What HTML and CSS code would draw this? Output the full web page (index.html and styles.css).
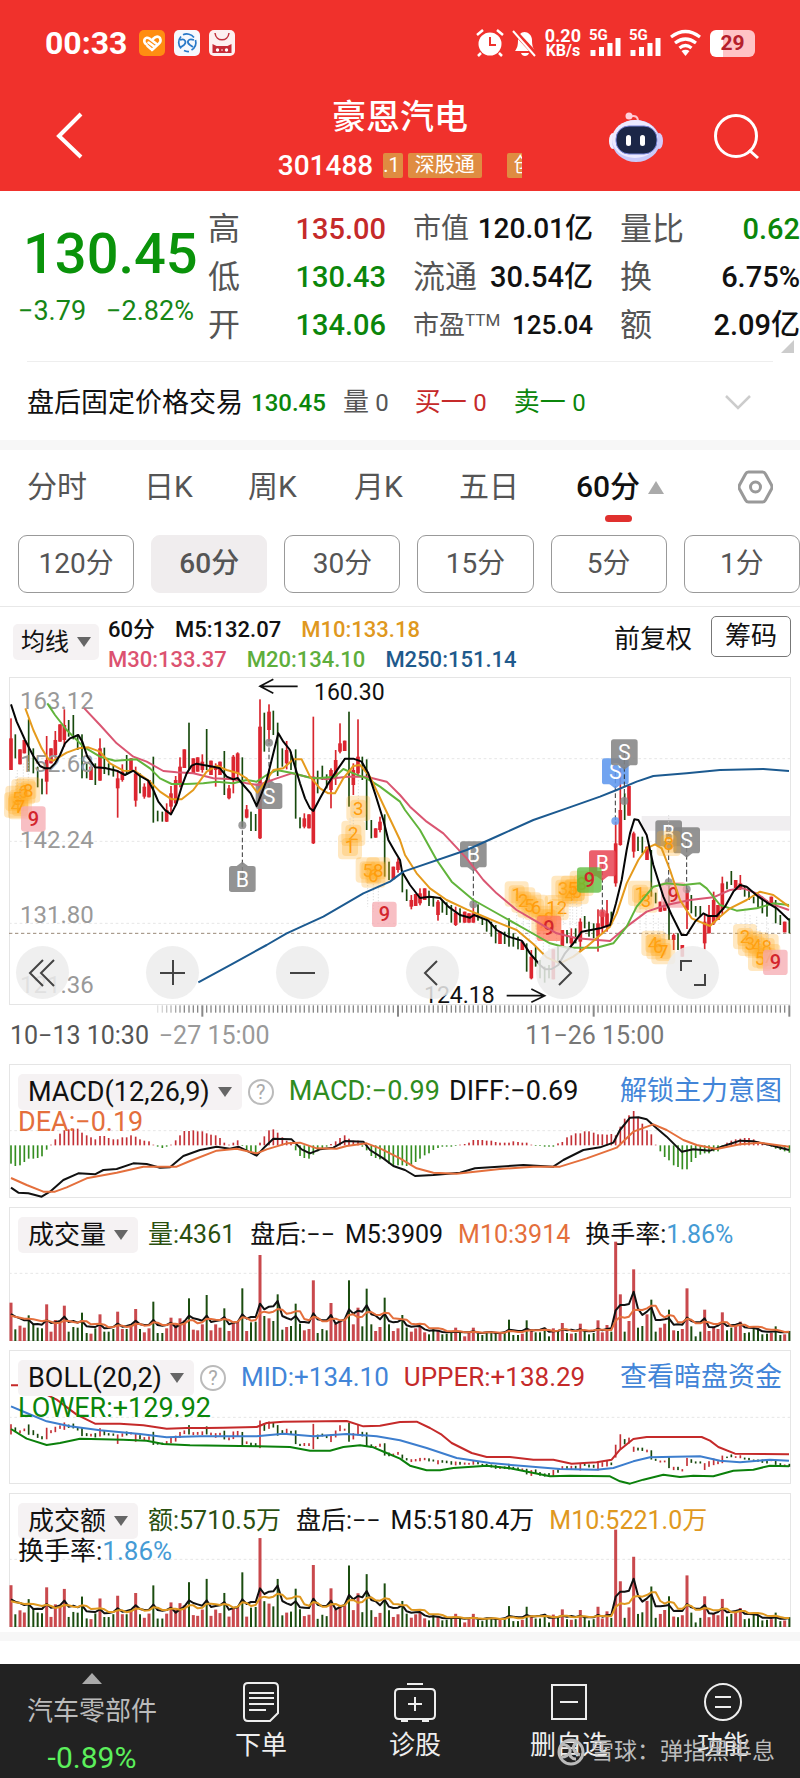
FILE: index.html
```html
<!DOCTYPE html>
<html lang="zh-CN">
<head>
<meta charset="utf-8">
<meta name="viewport" content="width=device-width, initial-scale=1">
<title>豪恩汽电 301488</title>
<link rel="stylesheet" href="styles.css">
</head>
<body>
<header class="top">
  <div class="status">
    <span class="clock">00:33</span>
    <svg class="app" viewBox="0 0 26 26"><rect width="26" height="26" rx="5" fill="#ff8d12"/><path d="M5.500 9.500q2-3 5-1l6.500 5M5.500 9.500q-1 3 2 5M14 9q4-4 7-1 1.500 3-1 5.500L13 20M9.500 12.500l5.500 4M8.500 16l3.500 3" stroke="#fff" stroke-width="2.600" stroke-linecap="round" fill="none"/></svg>
    <svg class="app" viewBox="0 0 26 26"><rect width="26" height="26" rx="5" fill="#f6f8fd"/><path d="M7 18.500a9 9 0 0 1 0-12M9 4.800a9 9 0 0 1 11 2.700M21.500 10a9 9 0 0 1-4 10M15 21.500a9 9 0 0 1-5-1M6 10c5-2 7 2 4 5l-3 2M20 10c-6-2-8 2-4 5l3 2" stroke="#2878c8" stroke-width="1.700" fill="none"/></svg>
    <svg class="app" viewBox="0 0 26 26"><rect width="26" height="26" rx="5" fill="#fdf0f1"/><path d="M6 3c1 9 13 9 14 0" stroke="#c0303c" stroke-width="1.500" fill="none"/><path d="M3.500 14l4 2h11l4-2v9h-19z" fill="#c62a36"/><circle cx="8.500" cy="20" r="1.700" fill="#fff"/><circle cx="17.500" cy="20" r="1.700" fill="#fff"/><circle cx="13" cy="20" r=".8" fill="#fff"/></svg>
    <div class="signals">
      <svg width="28" height="28" viewBox="0 0 28 28"><circle cx="14" cy="15" r="11.500" fill="#fff"/><path d="M1 6l6-5M27 6l-6-5M5 24l-3 3M23 24l3 3" stroke="#fff" stroke-width="2.500"/><path d="M14 8v8h6" stroke="#ee312c" stroke-width="2" fill="none"/></svg>
      <svg width="25" height="28" viewBox="0 0 25 28"><path d="M3 22c2-3 3-5 3-11 0-5 3-8 6.500-8S20 6 20 11c0 6 1 8 3 11zM9 24h8c-1 4-7 4-8 0z" fill="#fff"/><path d="M2 2l23 25" stroke="#ee312c" stroke-width="5"/><path d="M1 2l22 25" stroke="#fff" stroke-width="2"/></svg>
      <span class="speed"><b>0.20</b><b class="unit">KB/s</b></span>
      <span class="cell"><b>5G</b><svg width="32" height="28" viewBox="0 0 32 28"><path d="M4 21v6M12.500 18v9M21 14v13M29 9v18" stroke="#fff" stroke-width="5"/></svg></span>
      <span class="cell"><b>5G</b><svg width="32" height="28" viewBox="0 0 32 28"><path d="M4 21v6M12.500 18v9M21 14v13M29 9v18" stroke="#fff" stroke-width="5"/></svg></span>
      <svg width="33" height="28" viewBox="0 0 33 28"><path d="M2 8q14.500-11 29 0M6 14q10.500-8 21 0M10.500 19q6-5 12 0" stroke="#fff" stroke-width="3.200" fill="none"/><path d="M12.500 22q4-2.500 8 0l-4 5z" fill="#fff"/></svg>
      <span class="battery">29</span>
    </div>
  </div>
  <div class="titlebar">
    <button class="bare back" aria-label="返回"><svg width="28" height="48" viewBox="0 0 28 48"><path d="M25 2L3 24l22 21" stroke="#fff" stroke-width="4" fill="none"/></svg></button>
    <div class="name">
      <h1>豪恩汽电</h1>
      <div class="code"><span>301488</span><div class="tags"><span class="tag first">.1</span><span class="tag">深股通</span><span class="tag last">创</span></div></div>
    </div>
    <div class="tools">
      <button class="bare" aria-label="智能助手"><svg width="54" height="52" viewBox="0 0 54 52"><path d="M29 11c0-6-3-7-9-5" stroke="#ffc4cf" stroke-width="2" fill="none"/><circle cx="20" cy="5" r="3.500" fill="#ffd0dc"/><ellipse cx="4" cy="30" rx="4" ry="8" fill="#f3efff"/><ellipse cx="50" cy="30" rx="4" ry="8" fill="#d5cafa"/><ellipse cx="27" cy="30" rx="24" ry="21" fill="#c9cafa"/><ellipse cx="26" cy="28" rx="23" ry="19" fill="#edeaff"/><rect x="7" y="15" width="41" height="28" rx="13" fill="#1b2647" stroke="#7784d8" stroke-width="1"/><rect x="17" y="24" width="5" height="11" rx="2.500" fill="#fff"/><rect x="31" y="24" width="5" height="11" rx="2.500" fill="#fff"/></svg></button>
      <button class="bare" aria-label="搜索"><svg width="46" height="46" viewBox="0 0 46 46"><circle cx="22" cy="22" r="20.500" stroke="#fff" stroke-width="3" fill="none"/><path d="M35 36l9 8" stroke="#fff" stroke-width="3"/></svg></button>
    </div>
  </div>
</header>

<section class="quote">
  <div class="last-price"><strong>130.45</strong><p><span>−3.79</span><span>−2.82%</span></p></div>
  <dl>
    <div><dt>高</dt><dd class="red">135.00</dd></div>
    <div><dt>低</dt><dd class="green">130.43</dd></div>
    <div><dt>开</dt><dd class="green">134.06</dd></div>
  </dl>
  <dl>
    <div><dt class="mid">市值</dt><dd class="mid">120.01亿</dd></div>
    <div><dt>流通</dt><dd>30.54亿</dd></div>
    <div><dt class="small">市盈<sup>TTM</sup></dt><dd class="small">125.04</dd></div>
  </dl>
  <dl>
    <div><dt>量比</dt><dd class="green">0.62</dd></div>
    <div><dt>换</dt><dd>6.75%</dd></div>
    <div><dt>额</dt><dd>2.09亿</dd></div>
  </dl>
  <i class="corner"></i>
</section>
<section class="fixed-price">
  <span class="fp-name">盘后固定价格交易</span><span class="num green fp-price">130.45</span>
  <span class="gray fp-vol">量 <span class="num">0</span></span><span class="red fp-buy">买一 <span class="num">0</span></span><span class="green">卖一 <span class="num">0</span></span>
  <button class="bare more" aria-label="展开"><svg width="26" height="15" viewBox="0 0 26 15"><path d="M1 1l12 12L25 1" stroke="#ccc" stroke-width="2.500" fill="none"/></svg></button>
</section>

<nav class="tabs">
  <button class="bare">分时</button><button class="bare">日K</button><button class="bare">周K</button><button class="bare">月K</button><button class="bare">五日</button>
  <button class="bare active"><span>60分</span><i class="up"></i></button>
  <button class="bare" aria-label="设置"><svg width="35" height="34" viewBox="0 0 35 34"><path d="M10.500 2h14q2 0 3 2l6 11q1 2 0 4l-6 11q-1 2-3 2h-14q-2 0-3-2l-6-11q-1-2 0-4l6-11q1-2 3-2z" stroke="#999" stroke-width="3" fill="none"/><circle cx="17.500" cy="17" r="5" stroke="#999" stroke-width="3" fill="none"/></svg></button>
</nav>
<div class="periods">
  <button>120分</button><button class="on">60分</button><button>30分</button><button>15分</button><button>5分</button><button>1分</button>
</div>
<div class="averages">
  <button class="pick">均线<i class="down"></i></button>
  <div class="ma">
    <p><span>60分</span><span>M5:132.07</span><span class="orange">M10:133.18</span></p>
    <p><span class="pink">M30:133.37</span><span class="lime">M20:134.10</span><span class="navy">M250:151.14</span></p>
  </div>
  <button class="bare adj">前复权</button>
  <button class="chips">筹码</button>
</div>

<main>
  <section class="panel kline">
    <svg id="kline" class="plot" viewBox="27 21 2346 984"></svg>
    <div class="controls">
      <button aria-label="最早"><svg viewBox="0 0 53 53"><path d="M27 14L14 27l13 13M38 14L25 27l13 13"/></svg></button>
      <button aria-label="放大"><svg viewBox="0 0 53 53"><path d="M27 14v25M14 27h25"/></svg></button>
      <button aria-label="缩小"><svg viewBox="0 0 53 53"><path d="M14 27h25"/></svg></button>
      <button aria-label="向左"><svg viewBox="0 0 53 53"><path d="M31 15L19 27l12 12"/></svg></button>
      <button aria-label="向右"><svg viewBox="0 0 53 53"><path d="M23 15l12 12-12 12"/></svg></button>
      <button aria-label="全屏"><svg viewBox="0 0 53 53"><path d="M15 25V15h11M28 39h11V28"/></svg></button>
    </div>
  </section>
  <div class="axis">
    <svg id="ticks" class="plot" viewBox="27 1005 2346 42"></svg>
    <div class="dates"><span>10−13 10:30</span><span class="fade">−27 15:00</span><span class="later">11−26 15:00</span></div>
  </div>
  <section class="panel">
    <svg id="macd" class="plot" viewBox="27 42 2346 402"></svg>
    <div class="legend">
      <div class="line"><button class="pick big">MACD(12,26,9)<i class="down"></i></button><button class="help" aria-label="说明">?</button><span class="green2 wide">MACD:−0.99</span><span class="wide diff">DIFF:−0.69</span><a href="#macd">解锁主力意图</a></div>
      <div class="line second"><span class="coral">DEA:−0.19</span></div>
    </div>
  </section>
  <section class="panel">
    <svg id="volume" class="plot" viewBox="27 473 2346 402"></svg>
    <div class="legend">
      <div class="line"><button class="pick total">成交量<i class="down"></i></button><span class="forest">量:4361</span><span class="after">盘后:−−</span><span>M5:3909</span><span class="coral">M10:3914</span><span>换手率:<em>1.86%</em></span></div>
    </div>
  </section>
  <section class="panel">
    <svg id="boll" class="plot" viewBox="27 31 2346 402"></svg>
    <div class="legend">
      <div class="line"><button class="pick big">BOLL(20,2)<i class="down"></i></button><button class="help" aria-label="说明">?</button><span class="blue mean">MID:+134.10</span><span class="red mean">UPPER:+138.29</span><a href="#boll">查看暗盘资金</a></div>
      <div class="line second"><span class="green">LOWER:+129.92</span></div>
    </div>
  </section>
  <section class="panel">
    <svg id="amount" class="plot" viewBox="27 463 2346 402"></svg>
    <div class="legend">
      <div class="line"><button class="pick total">成交额<i class="down"></i></button><span class="forest">额:5710.5万</span><span class="after">盘后:−−</span><span>M5:5180.4万</span><span class="orange">M10:5221.0万</span></div>
      <div class="line second rate"><span>换手率:<em>1.86%</em></span></div>
    </div>
  </section>
</main>

<footer class="bottom">
  <button class="bare sector"><i class="up"></i><span>汽车零部件</span><b>-0.89%</b></button>
  <button class="bare"><svg width="40" height="42" viewBox="0 0 40 42"><path d="M7 2h26q4 0 4 4v26l-8 8H7q-4 0-4-4V6q0-4 4-4zM8 12h25M8 17h25M8 23h25M8 29h17" /></svg>下单</button>
  <button class="bare"><svg width="44" height="42" viewBox="0 0 44 42"><path d="M14 3h16M6 8h32q4 0 4 4v22q0 4-4 4H6q-4 0-4-4V12q0-4 4-4zM22 16v14M15 23h14M8 40h7M29 40h7"/></svg>诊股</button>
  <button class="bare"><svg width="38" height="42" viewBox="0 0 38 42"><path d="M2 4h34v34H2zM10 21h18"/></svg>删自选</button>
  <button class="bare"><svg width="40" height="42" viewBox="0 0 40 42"><circle cx="20" cy="21" r="18"/><path d="M12 16h16M12 26h16"/></svg>功能</button>
  <div class="credit"><svg width="28" height="28" viewBox="0 0 28 28"><circle cx="14" cy="14" r="12"/><path d="M5 7c5-1 9 3 8 7s2 7 6 7M19 5c-5 4-2 10 4 12M5 19c5 0 7-3 8-5"/></svg><span>雪球：弹指黑半息</span></div>
</footer>
<script src="charts.js"></script>
</body>
</html>
```
FILE: styles.css
```css
* { box-sizing: border-box; }
body { margin: 0; background: #fff; color: #111; font-family: Roboto, "Noto Sans CJK SC", sans-serif; font-size: 26px; overflow-x: hidden; }
button { font: inherit; color: inherit; margin: 0; padding: 0; cursor: pointer; }
.bare { background: none; border: 0; }
svg { display: block; flex: none; }
p, h1, dl, dd { margin: 0; }
i, em { font-style: normal; }
a { text-decoration: none; color: #4285d8; margin-left: auto; }

.red { color: #c52a2a; }
.green { color: #0b860b; }
.green2 { color: #2f8c20; }
.forest { color: #2a5010; }
.orange { color: #df9820; }
.pink { color: #dc5270; }
.lime { color: #5eae3c; }
.navy { color: #1f5a8c; }
.coral { color: #e46f3c; }
.blue { color: #4285d8; }
.gray { color: #555; }

.top { background: #f0312c; color: #fff; padding: 26px 0 1px; }
.status { display: flex; align-items: center; height: 34px; padding: 0 45px; gap: 9px; }
.clock { font-size: 32px; line-height: 34px; font-weight: 700; margin-right: 3px; }
.app { width: 26px; height: 26px; }
.signals { display: flex; align-items: center; margin-left: auto; gap: 8px; }
.speed { display: flex; flex-direction: column; align-items: center; font-size: 18px; line-height: 16px; }
.unit { font-size: 16px; line-height: 14px; }
.cell { display: grid; }
.cell > * { grid-area: 1 / 1; }
.cell b { font-size: 15px; line-height: 12px; }
.battery { width: 45px; height: 27px; border-radius: 6px; background: linear-gradient(90deg, #fff 29%, #ffc3c6 29%); color: #b5202c; font-size: 21px; font-weight: 700; line-height: 27px; text-align: center; }
.titlebar { display: grid; grid-template-columns: 1fr auto 1fr; align-items: center; padding: 34px 40px 0; }
.back { justify-self: start; margin: 0 0 12px 16px; }
.name { text-align: center; }
h1 { font-size: 34px; line-height: 46px; font-weight: 500; }
.code { display: flex; justify-content: center; align-items: center; gap: 10px; height: 50px; font-size: 28px; font-weight: 500; }
.tags { display: flex; gap: 5px; width: 139px; overflow: hidden; font-size: 20px; font-weight: 400; }
.tag { flex: none; background: #df8c41; border-radius: 2px; padding: 0 7px; line-height: 25px; white-space: nowrap; }
.first { padding: 0 3px 0 0; }
.last { margin-left: 20px; }
.tools { display: flex; justify-content: flex-end; align-items: center; gap: 51px; margin-bottom: 10px; }

.quote { position: relative; display: grid; grid-template-columns: 181fr 178fr 180fr 180fr; column-gap: 27px; padding: 14px 0 12px; }
.last-price { color: #0a930a; margin-right: -27px; padding: 17px 0 0 23px; }
.last-price strong { display: block; font-size: 56px; line-height: 64px; font-weight: 500; }
.last-price p { display: flex; gap: 20px; margin-left: -5px; font-size: 27px; line-height: 50px; color: #168616; }
.quote dl div { display: flex; justify-content: space-between; align-items: center; line-height: 48px; white-space: nowrap; height: 48px; }
dt { font-size: 32px; color: #555; }
dd { font-size: 29px; font-weight: 500; }
.mid { font-size: 28px; }
.small { font-size: 26px; }
sup { font-size: 17px; line-height: 1px; vertical-align: 8px; }
.corner { position: absolute; right: 6px; bottom: 8px; border-left: 13px solid transparent; border-bottom: 13px solid #ccc; }
.fixed-price { display: flex; align-items: center; height: 79px; margin: 0 27px; padding-top: 3px; border-top: 1px solid #eee; line-height: 40px; white-space: nowrap; }
.fp-name { font-size: 27px; }
.num { font-size: 24px; }
.fp-price { margin: 0 17px 0 8px; font-weight: 500; }
.fp-vol { margin-right: 26px; }
.fp-buy { margin-right: 27px; }
.more { margin: 0 22px 0 auto; }

.tabs { display: grid; grid-template-columns: 117fr 104fr 106fr 105fr 117fr 162fr 35fr; align-items: center; height: 83px; padding: 1px 27px 0; border-top: 10px solid #f7f7f7; font-size: 30px; color: #555; white-space: nowrap; }
.tabs button { text-align: left; line-height: 72px; }
.tabs .active { position: relative; display: flex; align-items: center; gap: 8px; color: #111; font-weight: 500; }
.active::after { content: ""; position: absolute; left: 29px; bottom: 1px; width: 27px; height: 7px; border-radius: 4px; background: #e0302e; }
.up { border: 8px solid transparent; border-top: 0; border-bottom: 13px solid #aaa; }
.down { border: 7px solid transparent; border-bottom: 0; border-top: 10px solid #666; margin-left: 8px; }
.periods { display: grid; grid-template-columns: repeat(6, 1fr); gap: 17px; padding: 12px 0 13px 18px; border-bottom: 1px solid #e8e8e8; }
.periods button { height: 58px; border: 1px solid #999; border-radius: 9px; background: #fff; color: #555; font-size: 28px; line-height: 56px; }
.periods .on { background: #f0edee; border-color: #f0edee; font-weight: 500; }
.averages { display: flex; align-items: center; height: 70px; padding: 0 9px 0 13px; white-space: nowrap; }
.pick { display: flex; align-items: center; height: 36px; border: 0; border-radius: 5px; background: #f5f2f3; padding: 0 8px; font-size: 24px; line-height: 36px; }
.ma { margin-left: 9px; padding-top: 5px; font-size: 22px; line-height: 30px; font-weight: 500; }
.ma p { display: flex; gap: 20px; }
.adj { margin: 0 19px 6px auto; line-height: 36px; }
.chips { width: 80px; height: 41px; margin-bottom: 12px; border: 1px solid #777; border-radius: 5px; background: #fff; line-height: 36px; }

main { padding: 0 9px; border-bottom: 9px solid #f7f7f7; }
.panel { display: grid; box-shadow: inset 0 0 0 1px #e5e5e5; margin-bottom: 9px; }
.panel:last-child { margin-bottom: 5px; }
.panel > * { grid-area: 1 / 1; }
.plot { width: 100%; height: auto; overflow: visible; }
.panel.kline { margin-bottom: 0; }
.controls { align-self: end; display: grid; grid-template-columns: repeat(6, 1fr); padding: 0 0 6px 7px; margin-right: -5px; }
.controls button { width: 53px; height: 53px; border: 0; border-radius: 50%; background: rgba(236, 236, 236, .85); }
.controls path { fill: none; stroke: #444; stroke-width: 2; }
.axis { height: 59px; }
.dates { display: grid; grid-template-columns: 149fr 367fr 266fr; padding-left: 1px; color: #555; font-size: 25px; line-height: 34px; white-space: nowrap; }
.fade { color: #999; }
.later { color: #777; }
.legend { padding: 9px; z-index: 1; min-width: 0; }
.line { display: flex; align-items: center; gap: 15px; height: 37px; font-size: 25px; line-height: 37px; white-space: nowrap; }
.line a, .wide, .big { font-size: 27px; }
.mean { font-size: 26px; }
.diff { margin-left: -6px; }
.line .pick { margin-right: -5px; padding: 0 10px; }
.line .big { font-size: 27px; }
.line .total { font-size: 26px; }
.help { width: 26px; height: 26px; border: 2px solid #bbb; border-radius: 50%; background: #fff; color: #aaa; font-size: 20px; line-height: 20px; margin-left: -4px; }
.after { margin-right: -5px; }
.line em { color: #459bd5; }
.line.second { height: 24px; font-size: 27px; }
.line.rate { font-size: 26px; }

.grid { stroke: #e6e6e6; stroke-width: 3; stroke-dasharray: 8 8; }
.cost { stroke: #998877; stroke-width: 3; stroke-dasharray: 10 8; }
.curve { fill: none; stroke-width: 6; stroke-linejoin: round; }
.scale { font-size: 72px; fill: #999; }
.peak { font-size: 69px; fill: #111; }
.mark { font-size: 64px; text-anchor: middle; fill: #fff; }
.nine { font-size: 60px; font-weight: 500; text-anchor: middle; fill: #d3252c; }
.turn { font-size: 56px; text-anchor: middle; fill: #ff9c0a; }

.bottom { position: relative; display: grid; grid-template-columns: 184fr 154fr 154fr 154fr 154fr; height: 114px; margin-top: 23px; background: #222; color: #eee; }
.bottom button { display: flex; flex-direction: column; align-items: center; padding-top: 17px; line-height: 44px; white-space: nowrap; }
.bottom svg { fill: none; stroke: #eee; stroke-width: 2; }
.bottom .sector { padding-top: 9px; color: #bbb; }
.sector .up { border-width: 0 10px 11px; }
.sector span { margin-top: 5px; }
.sector b { font-size: 30px; line-height: 50px; font-weight: 400; color: #5cf05c; }
.credit { position: absolute; right: 25px; bottom: 8px; display: flex; align-items: center; gap: 6px; font-size: 23px; line-height: 36px; color: #bbb; }
.bottom .credit svg { stroke: #bbb; stroke-width: 3; }
```
FILE: charts.js
```js
// Candles: [colour, high, low, body top, body bottom]; the body defaults to the whole bar.
const candles = `r145 300 205 300,g193 265,r238 283,r210 250,g148 305,g235 310,g290 352,g326 373,r198 373 270 335,r235 280,
r183 265 210 255,r163 215,r118 230 165 210,g150 200,g135 208,g193 240,g193 325,g280 325,r290 330,g280 345,
r205 332 235 332,g233 312,g280 316,g285 320,r300 443 325 355,r283 335 305 330,g255 315,r265 300,r290 410 310 392,g310 370,
r340 386 350 380,r330 382,g260 458,g422 454,g425 455,r400 456 420 455,r348 432 370 410,r318 408 330 400,r262 352 290 340,r238 294,
g158 300,r265 310,r262 305,r253 308 275 300,g177 300,r272 315,r280 350 290 300,r275 315,g243 375,r345 388 355 385,
r255 370 260 330,r247 330 250 310,g262 470,r405 445 418 443,g425 483,g432 483,r88 507 170 505,g128 245,r103 215 125 180,g122 195,
g158 318,g235 290,r213 298 240 280,g245 300,g238 446,g442 475,r430 475 445 470,r433 475,r140 522 320 520,g302 370,
g287 330,g313 355,r295 415 300 360,r240 345 270 320,r160 250 220 245,r212 243,g125 410,r280 375 300 345,r148 315 260 310,g260 330,
g268 480,g450 505,r475 503,r440 487 455 480,g433 620,g575 630,r590 628,r565 608 575 600,g605 667,g658 693,
r675 718 690 710,r672 708,r655 706 670 700,r655 690,g662 708,g680 710,r690 752 695 735,g690 728,g697 735,g705 758,
r710 768 728 765,g715 758,r725 758,r730 758,r700 758 730 758,g703 752,g745 765,g745 785,g755 800,g765 820,
r785 822,g785 822,g745 830,g790 830,g800 838,r815 840,g820 905,r840 928 860 925,g830 890,g870 925,
g890 938,g885 925,r838 928,g830 880,r780 830,g780 820,r775 830 800 820,g775 820,r745 845 755 815,g738 775,
g755 800,g760 805,r718 845 760 800,r720 790 725 770,r690 785 730 770,g725 765,r455 650 520 640,r297 527 420 525,g370 450,r348 437,
r485 563 490 545,g500 543,g500 550,r530 570,g540 680,g668 700,r695 725,r695 722,g640 810,r790 840 795 810,
g790 840,r825 860,r655 777 660 720,g675 730,g708 740,g708 740,r735 838 755 820,r705 790 740 790,r665 765 690 760,r705 750,
r620 735 640 720,g635 658,g603 645,r630 655,r615 660 640 655,g650 680,g655 690,g680 700,g680 712,g680 730,
g690 740,r680 705,g690 760,g735 765,r755 787,g745 790`.split(',').map(s => {
  s = s.trim();
  const n = s.slice(1).split(' ').map(Number);
  return { red: s[0] === 'r', high: n[0], low: n[1], top: n[2] ?? n[0], bottom: n[3] ?? n[1] };
});
const volumes = [115,35,46,40,77,52,40,38,110,28,63,60,106,28,42,40,85,24,22,38,80,28,28,36,88,36,36,48,96,36,26,38,118,24,24,38,70,50,68,62,128,34,32,50,138,32,50,40,98,30,55,60,158,30,56,58,258,75,68,60,140,34,42,45,112,52,32,36,182,24,36,32,114,52,60,65,182,50,100,44,157,50,30,42,130,50,30,38,78,40,28,38,42,26,20,36,32,20,22,26,40,26,14,24,40,22,18,26,28,26,22,28,64,18,18,22,62,36,26,26,40,14,38,30,54,24,22,24,52,28,20,24,62,26,48,28,298,140,28,60,215,40,45,80,124,28,40,52,94,32,30,36,158,44,14,28,94,30,40,36,86,32,40,50,58,24,26,38,36,20,22,24,44,18,20,30];
const histogram = [-55,-62,-60,-50,-40,-40,-38,-33,-13,2,18,35,45,48,50,50,38,30,24,18,28,28,22,18,18,24,24,30,26,18,14,12,2,-4,-8,-4,2,15,30,43,43,45,42,42,36,32,30,22,8,2,8,15,-2,-15,-22,-26,8,27,45,48,38,24,14,10,-15,-32,-38,-40,-28,-18,-12,-4,4,12,22,30,20,14,14,-4,-15,-32,-38,-42,-42,-55,-60,-60,-60,-62,-58,-50,-40,-30,-24,-14,-8,-4,-4,-4,-2,2,4,8,16,16,16,14,14,10,8,8,8,12,10,8,8,2,-2,-2,-4,-4,-4,6,10,24,30,36,36,42,42,38,33,33,32,34,30,56,80,90,103,85,65,45,33,2,-18,-35,-45,-60,-65,-72,-72,-50,-38,-28,-24,-24,-18,-18,-8,8,14,18,20,22,22,18,12,8,4,-4,-10,-14,-18,-22];

const xAt = i => Math.round(33 + i * 13.34);
const bar = (x, y1, y2, w, c, o = 1) => `<rect x="${x - w / 2}" y="${Math.min(y1, y2)}" width="${w}" height="${Math.max(2, Math.abs(y2 - y1))}" fill="${c}" opacity="${o}"/>`;
const curve = (pts, c) => `<polyline class="curve" stroke="${c}" points="${pts}"/>`;
const rule = (y, k = 'grid') => `<line class="${k}" x1="27" x2="2373" y1="${y}" y2="${y}"/>`;
const put = (id, html) => { document.getElementById(id).innerHTML = html; };

const badge = (x, y, letter, color, end, up) => {
  const tip = up ? `${x - 18},${y - 38} ${x},${y - 52} ${x + 18},${y - 38}` : `${x - 18},${y + 38} ${x},${y + 52} ${x + 18},${y + 38}`;
  return `<line x1="${x}" x2="${x}" y1="${y}" y2="${end}" stroke="#333" stroke-width="3" stroke-dasharray="14 8"/><circle cx="${x}" cy="${end}" r="12" fill="${color}" opacity=".8"/>
  <g opacity=".88"><rect x="${x - 40}" y="${y - 39}" width="80" height="78" rx="8" fill="${color}"/><polygon points="${tip}" fill="${color}"/></g><text class="mark" x="${x}" y="${y + 23}">${letter}</text>`;
};
const nine = (x, y, c = '#f6a9b0') => `<rect x="${x - 37}" y="${y - 38}" width="74" height="76" rx="10" fill="${c}" opacity=".75"/><text class="nine" x="${x}" y="${y + 21}">9</text>`;
const turn = ([x, y, t]) => `<line x1="${x}" x2="${x}" y1="${y}" y2="${y > 560 && y < 770 ? y + 110 : y - 90}" stroke="#ccc" stroke-width="2" stroke-dasharray="4 5"/><rect x="${x - 36}" y="${y - 38}" width="72" height="76" rx="12" fill="#ffae25" opacity=".28"/><rect x="${x - 24}" y="${y - 26}" width="48" height="54" rx="12" fill="#ffae25" opacity=".28"/><text class="turn" x="${x}" y="${y + 20}">${t}</text>`;

const ma20 = '142,100 165,135 200,180 250,230 300,260 345,272 410,268 450,295 480,325 515,342 560,342 610,340 650,335 700,340 740,330 770,335 800,315 830,300 880,310 930,323 950,325 1005,320 1030,297 1060,310 1100,325 1140,350 1200,395 1215,420 1260,480 1310,570 1355,635 1420,690 1500,735 1580,780 1650,820 1700,833 1790,833 1840,820 1880,770 1910,710 1960,650 2000,640 2050,645 2100,640 2120,655 2160,705 2210,722 2270,715 2320,700 2367,705';
const ma30 = '253,115 300,165 350,220 400,260 440,275 490,303 530,307 580,310 640,325 700,328 740,340 775,345 830,325 875,310 920,320 980,328 1040,320 1100,320 1160,335 1200,375 1230,410 1280,455 1330,490 1400,565 1450,630 1490,670 1550,720 1610,755 1670,790 1730,805 1830,813 1880,770 1940,725 2000,705 2070,690 2140,682 2190,660 2230,655 2270,670 2310,700 2367,720';
const ma10 = '76,115 100,180 125,235 145,268 160,272 200,248 235,235 265,232 300,245 330,280 370,302 405,303 450,335 480,365 515,388 545,388 580,360 620,305 650,287 680,300 715,310 740,325 755,345 772,368 800,330 820,300 850,295 880,268 905,268 930,320 960,355 985,370 1005,370 1030,325 1060,288 1080,285 1110,320 1150,405 1200,510 1215,555 1250,610 1290,655 1340,690 1400,718 1440,735 1500,760 1550,780 1600,822 1640,862 1680,880 1720,860 1760,830 1830,770 1850,730 1880,640 1915,570 1940,535 1965,523 1985,535 2010,600 2040,690 2075,745 2130,768 2160,740 2190,715 2240,690 2280,665 2320,675 2367,710';
const ma5 = '33,103 50,155 75,210 100,258 120,288 135,295 150,295 165,280 180,255 195,220 210,205 235,195 247,215 262,260 285,292 315,294 350,302 375,315 400,302 420,318 445,332 460,360 475,395 495,420 513,433 530,400 545,350 560,310 575,287 590,281 610,285 640,290 660,295 680,320 700,328 713,324 730,345 752,370 770,408 785,370 800,330 820,250 835,190 850,215 870,240 885,290 900,340 915,385 930,415 940,423 960,385 985,340 1010,302 1035,266 1060,266 1085,275 1105,310 1125,370 1150,450 1165,510 1185,545 1200,570 1206,605 1230,645 1260,684 1290,680 1320,684 1345,710 1380,735 1410,743 1422,735 1465,752 1490,780 1525,800 1565,812 1590,850 1620,885 1635,898 1655,897 1675,885 1695,850 1720,820 1745,785 1800,775 1830,765 1848,700 1865,630 1880,540 1890,490 1903,448 1915,450 1940,495 1960,585 1990,680 2015,735 2045,795 2060,795 2085,755 2110,730 2125,738 2150,738 2175,710 2200,665 2220,645 2240,650 2275,680 2305,700 2330,715 2367,750';
const ma250 = '595,937 700,880 800,825 860,790 970,740 1090,670 1170,635 1210,605 1400,540 1500,495 1600,450 1700,415 1800,380 1850,360 1910,335 1960,318 2060,310 2160,300 2290,297 2367,303';
const turns = [[48,405,4],[52,385,5],[70,365,6],[85,360,8],[60,410,7],[1075,415,3],[1060,490,2],[1050,530,1],[1103,600,5],[1120,615,6],[1135,600,8],
  [1550,672,1],[1570,690,2],[1588,705,5],[1608,712,6],[1630,755,7],[1647,745,8],[1670,713,12],[1690,655,3],[1710,672,4],[1730,665,6],[1745,640,8],[1718,655,5],
  [1920,670,1],[1938,690,3],[1960,820,4],[1975,830,6],[1990,845,7],[2006,520,8],[2235,800,2],[2250,820,3],[2270,825,4],[2300,830,8],[2280,865,5],[2305,860,7]];

put('kline', [
  rule(266), rule(514), rule(760),
  '<rect x="1925" y="438" width="446" height="44" fill="#f0eef0"/>',
  rule(790, 'cost'),
  candles.map((c, i) => c.red ? bar(xAt(i), c.high, c.low, 5, '#d8262e') + bar(xAt(i), c.top, c.bottom, 11, '#dc2630') : bar(xAt(i), c.high, c.low, 5, '#17490c')).join(''),
  [['163.12', 117], ['152.68', 307], ['142.24', 533], ['131.80', 760], ['121.36', 968]].map(([t, y]) => `<text class="scale" x="60" y="${y}">${t}</text>`).join(''),
  badge(1846, 304, 'S', '#5f98ee', 453), badge(1873, 247, 'S', '#858585', 393),
  badge(727, 627, 'B', '#858585', 466, true), badge(807, 378, 'S', '#858585', 218, true),
  badge(1420, 553, 'B', '#858585', 703), badge(1807, 580, 'B', '#e94a58', 730),
  badge(2006, 490, 'B', '#858585', 637), badge(2060, 511, 'S', '#858585', 658),
  turns.map(turn).join(''),
  nine(100, 447), nine(1153, 733), nine(1647, 775, '#ff775b'), nine(1768, 630, '#55b936'), nine(2020, 675), nine(2326, 877),
  curve(ma30, '#da5672'), curve(ma20, '#61b43b'), curve(ma10, '#e59a1c'), curve(ma5, '#050505'), curve(ma250, '#1c5a90'),
  '<path d="M893 49H782M820 28L780 49l40 21M1520 977h112M1594 957l40 20-40 20" stroke="#111" stroke-width="5" fill="none"/>',
  '<text class="peak" x="942" y="90">160.30</text><text class="peak" x="1272" y="998">124.18</text>'
].join(''));

let ticks = '';
for (let i = 33; i < 176; i++) {
  const major = [43, 87, 131, 175].includes(i);
  ticks += bar(xAt(i), 1006, major ? 1040 : 1028, major ? 6 : 4, '#888', Math.min(1, (i - 31) / 8));
}
put('ticks', ticks);

put('macd', rule(242) + histogram.map((v, i) => bar(xAt(i), 286, 286 - v, 5, v > 0 ? '#c33036' : '#348d20')).join('')
  + curve('33,413 55,428 85,430 125,440 150,425 190,390 235,370 285,373 310,360 350,357 400,340 440,342 480,353 510,352 550,318 600,300 650,290 690,296 715,290 740,302 770,317 795,290 820,266 875,268 905,298 930,310 960,298 1000,293 1035,273 1090,275 1110,300 1150,325 1180,348 1215,360 1245,378 1300,375 1380,368 1425,355 1570,345 1660,350 1690,330 1750,300 1800,292 1840,278 1860,240 1890,203 1915,202 1940,208 1970,235 2000,260 2045,305 2080,298 2130,302 2180,285 2220,272 2260,274 2310,285 2367,300', '#111')
  + curve('33,384 80,405 130,425 165,425 200,412 260,385 350,368 430,350 480,350 530,350 570,333 650,302 710,296 770,310 800,298 860,280 900,278 950,295 1010,296 1040,288 1100,280 1140,295 1200,325 1250,355 1300,368 1370,371 1500,357 1600,350 1680,350 1760,325 1850,293 1900,245 1960,223 2000,240 2050,270 2090,285 2150,297 2220,283 2280,278 2367,290', '#e46f3c'));

const average = (data, n, base) => data.map((_, i) => {
  let sum = 0;
  for (let k = 0; k < n; k++) sum += data[i - k] ?? 72;
  return `${xAt(i)},${Math.round(base - sum / n)}`;
}).join(' ');
const columns = (id, data, base, slow) => put(id, rule(base - 203)
  + data.map((v, i) => candles[i].red ? bar(xAt(i), base, base - v, 9, '#c9494d') : bar(xAt(i), base, base - v, 6, '#1b4d10')).join('')
  + curve(average(data, 5, base), '#111') + curve(average(data, 10, base), slow));
columns('volume', volumes, 875, '#e46f3c');
columns('amount', volumes.map((v, i) => v * Math.max(.98, 1.09 - i * .001)), 865, '#df9820');

const small = y => 225 + y * .198;
put('boll', rule(233) + candles.map((c, i) => bar(xAt(i), small(c.high), small(c.low), 5, c.red ? '#c33036' : '#17490c')).join('')
  + curve('33,137 75,137 120,155 170,180 230,225 285,252 360,252 430,257 500,267 560,265 620,265 670,264 770,262 800,250 850,246 1040,244 1090,260 1140,258 1200,247 1250,246 1290,265 1325,285 1355,310 1415,340 1460,352 1530,352 1600,360 1660,360 1715,372 1790,368 1835,360 1860,330 1900,298 1940,292 2105,292 2130,303 2155,322 2205,342 2367,344', '#c52a2a')
  + curve('33,200 80,220 140,245 210,260 300,272 420,283 500,293 600,290 700,290 770,290 850,282 940,290 1040,283 1130,290 1200,302 1280,325 1370,355 1470,370 1580,380 1680,388 1790,390 1840,385 1900,365 1950,353 2100,350 2160,363 2220,368 2310,360 2367,363', '#3d7ece')
  + curve('33,268 80,297 140,316 180,310 240,297 370,300 440,303 490,313 570,317 770,320 870,322 930,333 990,333 1030,322 1080,317 1120,323 1160,340 1200,357 1230,378 1280,392 1320,392 1360,385 1460,378 1530,386 1590,398 1650,410 1710,408 1830,410 1860,425 1890,432 1930,420 1990,405 2040,412 2080,408 2140,410 2200,393 2260,390 2310,378 2367,380', '#0b800b'));
```
